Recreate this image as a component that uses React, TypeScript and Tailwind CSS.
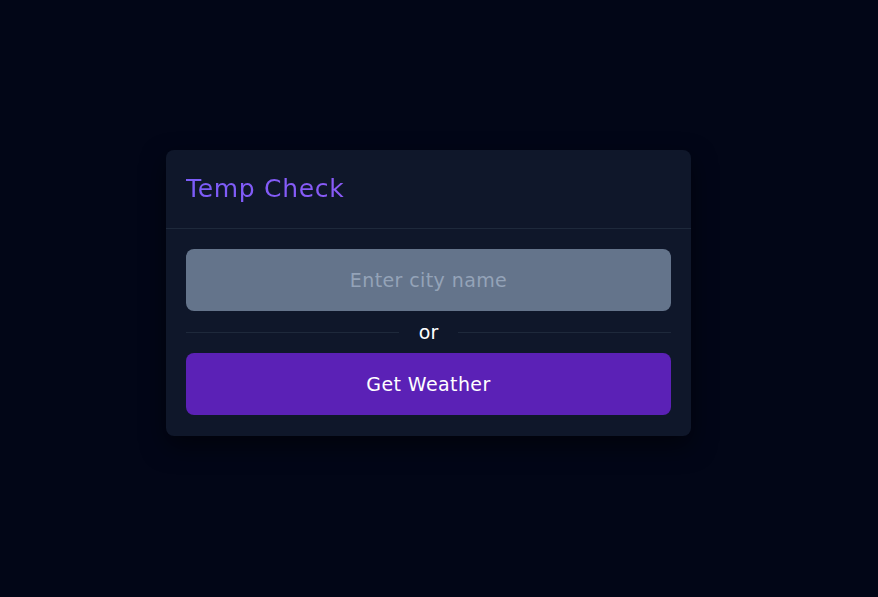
export default function App() {
  const font = { fontFamily: '"DejaVu Sans", "Open Sans", sans-serif' };
  return (
    <div className="min-h-screen w-full bg-[#020617] pt-[150px] pl-[166px]" style={font}>
      <div className="w-[525px] rounded-lg bg-[#0f172a] shadow-[0_10px_25px_rgba(0,0,0,0.5)]">
        <div className="border-b border-[#1e293b] px-5 py-5">
          <h1 className="bg-gradient-to-r from-[#7b5cf8] to-[#a855f7] bg-clip-text text-[25px] leading-[38px] tracking-[0.7px] text-transparent">
            Temp Check
          </h1>
        </div>
        <div className="flex flex-col px-5 pt-5 pb-[21px]">
          <input
            placeholder="Enter city name"
            className="h-[62px] w-full rounded-lg bg-[#64748b] text-center text-[19px] tracking-[0.4px] text-white outline-none placeholder:text-[#94a3b8]"
          />
          <div className="my-[9px] flex h-6 items-center">
            <div className="h-px flex-1 bg-[#1e293b]" />
            <span className="px-5 text-[19px] leading-6 text-white">or</span>
            <div className="h-px flex-1 bg-[#1e293b]" />
          </div>
          <button className="h-[62px] w-full rounded-lg bg-[#5b21b6] text-[19px] tracking-[0.4px] text-white">
            Get Weather
          </button>
        </div>
      </div>
    </div>
  );
}
